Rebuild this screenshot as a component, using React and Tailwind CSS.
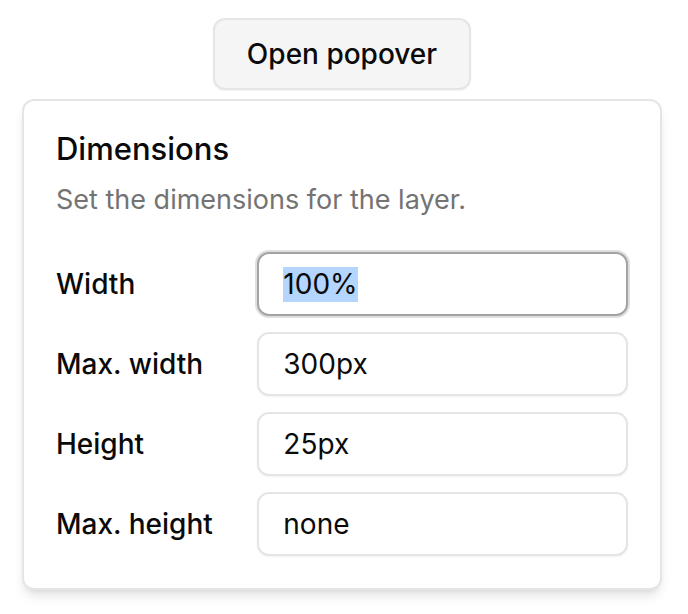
import React from "react";

const font = { fontFamily: "Inter, 'Liberation Sans', sans-serif" };

function Field({ label, value, focused }) {
  return (
    <div className="grid grid-cols-3 items-center gap-[32px]">
      <div className="text-[28px] font-medium leading-none text-[#0a0a0a]">{label}</div>
      {focused ? (
        <div className="col-span-2 flex h-[64px] items-center rounded-[12px] border-2 border-[#a3a3a3] bg-white px-[24px] text-[28px] text-[#0a0a0a] shadow-[0_0_0_2px_rgba(163,163,163,0.35)]">
          <span className="bg-[#b4d5fe] leading-[35px]">{value}</span>
        </div>
      ) : (
        <input
          readOnly
          defaultValue={value}
          className="col-span-2 h-[64px] rounded-[12px] border-2 border-[#e5e5e5] bg-white px-[24px] text-[28px] text-[#0a0a0a] shadow-[0_1px_2px_rgba(0,0,0,0.05)] outline-none"
          style={font}
        />
      )}
    </div>
  );
}

export default function App() {
  return (
    <div className="min-h-[614px] bg-white pt-[18px] pl-[22px]" style={font}>
      <div className="w-[640px]">
        <div className="flex justify-center">
          <button className="h-[72px] rounded-[12px] border-2 border-[#e5e5e5] bg-[#f5f5f5] px-[32px] text-[28px] font-medium text-[#0a0a0a] shadow-[0_1px_2px_rgba(0,0,0,0.05)]">
            Open popover
          </button>
        </div>
        <div className="mt-[9px] rounded-[12px] border-2 border-[#e5e5e5] bg-white p-[32px] shadow-[0_8px_12px_-2px_rgba(0,0,0,0.1),0_4px_6px_-4px_rgba(0,0,0,0.1)]">
          <div className="flex flex-col gap-[32px]">
            <div className="flex flex-col gap-[16px]">
              <div className="text-[31px] font-medium leading-none text-[#0a0a0a]">Dimensions</div>
              <div className="text-[27px] leading-[40px] text-[#737373]">Set the dimensions for the layer.</div>
            </div>
            <div className="flex flex-col gap-[16px]">
              <Field label="Width" value="100%" focused />
              <Field label="Max. width" value="300px" />
              <Field label="Height" value="25px" />
              <Field label="Max. height" value="none" />
            </div>
          </div>
        </div>
      </div>
    </div>
  );
}
